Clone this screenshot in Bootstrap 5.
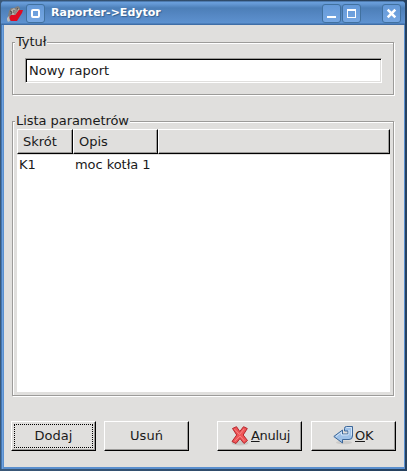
<!DOCTYPE html>
<html lang="pl">
<head>
<meta charset="utf-8">
<meta name="viewport" content="width=device-width, initial-scale=1">
<title>Raporter->Edytor</title>
<link href="https://cdn.jsdelivr.net/npm/bootstrap@5.3.0/dist/css/bootstrap.min.css" rel="stylesheet">
<style>
:root{--face:#e0dfdd;--shade:#9c9b99}
body{margin:0;overflow:hidden;background:#2f4c6f;font:13px/16px "DejaVu Sans",sans-serif;color:#1a1a1a}
.win{width:407px;height:471px;padding:1px 2px 2px 1px;background:linear-gradient(90deg,#3a5878,#26415f)}
.frame{height:468px;padding:0 1px 2px 3px;background:linear-gradient(90deg,#4477b3 0 1px,#6fa2de 1px 2px,#5a8fce 2px);border-radius:4px 4px 0 0;overflow:hidden}
.titlebar{height:24px;margin:0 -1px 0 -3px;padding:1px 4px 0 5px;background:linear-gradient(#325782 0,#6a9fdc 1px,#6498d4 3px,#4c7fb8 7px,#5587c3 14px,#5d92d0 22px,#3f6ea7 23px)}
.caption-text{font-weight:bold;font-size:11px;letter-spacing:.02px;color:#fff;text-shadow:1px 1px 1px #35608f;margin:-1px 0 0 6px;line-height:14px;white-space:nowrap}
.tb{width:19px;height:19px;border:1px solid #41719f;border-radius:3px;background:linear-gradient(#6499d8,#76a7e2);flex:none;display:block;padding:0}
.tb svg{display:block}
.tb-menu{margin-left:2px}
.tb-max{margin-left:1px}
.tb-close{margin-left:21px}
.pane{height:442px;background:var(--face);padding:17px 7px 0 8px}
.group{border:1px solid var(--shade);box-shadow:1px 1px #fff,inset 1px 1px #fff;width:382px}
.group-title{width:max-content;height:16px;margin:-9px 0 0 2px;padding:0 1px;background:var(--face);letter-spacing:-.05px}
.g1{height:53px;margin-bottom:26px}
.g2{height:275px;margin-bottom:25px}
.entry{width:357px;height:25px;margin:8px 0 0 12px;background:#fff;border:1px solid;border-color:var(--shade) #fff #fff var(--shade);box-shadow:inset 1px 1px #000,inset -1px -1px var(--face);font:13px/16px "DejaVu Sans",sans-serif;color:#1a1a1a;padding:0 3px;border-radius:0;outline:0;display:block}
.list{width:373px;height:263px;margin:0 0 0 4px;background:#fff}
.hd{height:25px;background:var(--face);border:1px solid;border-color:#fff #000 #000 #fff;box-shadow:inset -1px -1px var(--shade);padding:4px 0 0 5px;white-space:nowrap}
.c1{width:56px}.c2{width:85px}
.rowline{border-top:1px solid var(--face);padding:2px 0 0 2px;letter-spacing:-.05px}
.k{width:56px}
.push{width:85px;height:30px;padding:0;border:1px solid;border-color:#fff #000 #000 #fff;border-radius:0;background:var(--face);box-shadow:inset -1px -1px var(--shade);color:#1a1a1a;font:13px/16px "DejaVu Sans",sans-serif;position:relative;flex:none}
.focused::after{content:"";position:absolute;inset:2px;border:1px dotted #000}
.actions{margin-left:-1px}
.cancel{margin-left:28px;padding-left:13px;letter-spacing:-.3px}
.accept{margin-left:9px;padding-left:21px;letter-spacing:-.3px}
.push-label{margin-left:2px}
</style>
<script src="https://cdn.jsdelivr.net/npm/bootstrap@5.3.0/dist/js/bootstrap.bundle.min.js"></script>
</head>
<body>
<div class="win"><div class="frame">
<header class="titlebar d-flex align-items-center">
<svg width="18" height="18" viewBox="0 0 18 18" class="flex-shrink-0"><path d="M3 6 5 3 8 3 12 1 14 3 14 6 11 9 9 14 4 16 1 15 2 11Z" fill="#807e7b"/><path d="m5 5 3-2 2 2 3-2 0 2-3 4-1 3-3-1Z" fill="#b3afa8"/><path d="m4 6 2 1-1 2M8 5v3M12 3l-2 4" stroke="#4b4746" fill="none"/><path d="m5 10 4 0 4-5 4 0-1 3-5 8H5l-2-3Z" fill="#e00b22"/><path d="m1 13 2-2 1 5-2 1-1-2Z" fill="#b9bcbd"/><path d="M8 6l4-2-2 5-2 1Z" fill="#8f8b86"/></svg>
<button class="tb tb-menu" aria-label="Menu"><svg width="17" height="17"><rect x="5" y="5" width="7" height="7" rx="1" fill="none" stroke="#fff" stroke-width="2"/></svg></button>
<span class="caption-text flex-grow-1">Raporter-&gt;Edytor</span>
<button class="tb" aria-label="Minimalizuj"><svg width="17" height="17"><path d="M4 11h9v2H4z" fill="#fff"/></svg></button>
<button class="tb tb-max" aria-label="Maksymalizuj"><svg width="17" height="17"><path d="M4 4h9v9H4zM5 6v6h7V6z" fill="#fff" fill-rule="evenodd"/></svg></button>
<button class="tb tb-close" aria-label="Zamknij"><svg width="17" height="17"><path d="m4.700 4.700 7.600 7.600m0-7.600-7.600 7.600" stroke="#fff" stroke-width="2.600"/></svg></button>
</header>
<main class="pane">
<section class="group g1"><div class="group-title">Tytuł</div><input class="entry" value="Nowy raport" aria-label="Tytuł"></section>
<section class="group g2"><div class="group-title">Lista parametrów</div>
<div class="list">
<div class="d-flex"><div class="hd c1">Skrót</div><div class="hd c2">Opis</div><div class="hd flex-grow-1"></div></div>
<div class="rowline d-flex"><div class="k">K1</div><div>moc kotła 1</div></div>
</div></section>
<div class="actions d-flex">
<button class="push focused">Dodaj</button>
<button class="push ms-2">Usuń</button>
<button class="push cancel d-flex align-items-center">
<svg width="18" height="20" viewBox="0 0 18 20" class="flex-shrink-0"><ellipse cx="9" cy="17" rx="8.500" ry="2.500" fill="#c8c7c5"/><path d="M1.500 2.500 5.500 .7 8.800 5.500 12.500 .7 16.300 2.500 12.200 9 16.500 14.500 13 17.500 9 12.500 5 17.500 1 15.500 5.700 9Z" fill="#ef5557" stroke="#b4262c" stroke-linejoin="round"/><path d="m3.500 3.200 5 5.300 4.500-5.500M3.800 15l5.200-5 4.500 5" fill="none" stroke="#f58585"/></svg>
<span class="push-label"><u>A</u>nuluj</span></button>
<button class="push accept d-flex align-items-center">
<svg width="20" height="20" viewBox="0 0 20 20" class="flex-shrink-0"><ellipse cx="11" cy="16.500" rx="8" ry="1.800" fill="#cccbc9"/><path d="M11.500 2.500Q11.500.5 13.500.5h6V10q0 3.500-3.500 3.500H9.500V17L.8 10.500 9.500 4v4h4.500q1 0 1-1V5h-3.500Z" fill="#9fc2e8" stroke="#3d6799" stroke-linejoin="round"/><path d="M3 10.500 8.500 6.200V9h6q1.500 0 1.500-1.500V4M13 2q0-.5 1-.5h4.500V9.500" fill="none" stroke="#d3e4f6"/></svg>
<span class="push-label"><u>O</u>K</span></button>
</div>
</main>
</div></div>
</body>
</html>
